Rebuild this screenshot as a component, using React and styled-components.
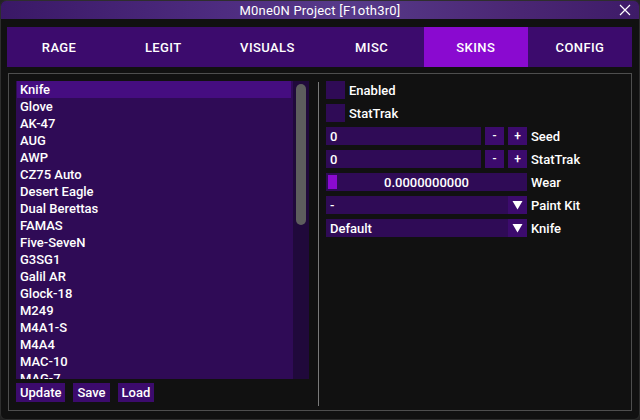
import React from 'react'
import styled, {createGlobalStyle} from 'styled-components'

const GlobalStyle = createGlobalStyle`
  html, body {
    margin: 0;
    padding: 0;
    background: #232323;
  }
  body {
    font-family: Roboto, "Noto Sans", "DejaVu Sans", sans-serif;
    color: #ffffff;
  }
  * {
    box-sizing: border-box;
  }
`

const Window = styled.div`
  width: 640px;
  height: 420px;
  display: flex;
  flex-direction: column;
  background: #111111;
  border: 1px solid #2e2e2e;
  border-radius: 6px;
  overflow: hidden;
`

const TitleBar = styled.div`
  height: 18px;
  flex: none;
  display: flex;
  align-items: center;
  justify-content: center;
  position: relative;
  background: linear-gradient(90deg, #3a1866 0%, #4e2c80 35%, #573a8a 55%, #4b2774 80%, #3e1b68 100%);
  font-size: 13px;
  font-weight: 400;
  letter-spacing: 0.2px;
`

const CloseButton = styled.div`
  position: absolute;
  right: 8px;
  top: 3px;
  width: 12px;
  height: 12px;
  display: flex;
`

const Body = styled.div`
  flex: 1;
  display: flex;
  flex-direction: column;
  padding: 8px 7px 8px 6px;
  gap: 6px;
`

const TabBar = styled.div`
  height: 40px;
  display: flex;
  background: #3c0b6d;
`

const Tab = styled.div`
  flex: 1;
  display: flex;
  align-items: center;
  justify-content: center;
  font-size: 13px;
  font-weight: 500;
  letter-spacing: 0.4px;
  background: ${p => (p.active ? '#8a0ad0' : '#3c0b6d')};
`

const Frame = styled.div`
  flex: 1;
  margin-left: 1px;
  display: flex;
  border: 1px solid #4e4e4e;
`

const LeftColumn = styled.div`
  width: 309px;
  flex: none;
  display: flex;
  flex-direction: column;
  padding: 7px 9px 7px 7px;
  gap: 4px;
`

const ListBox = styled.div`
  height: 298px;
  display: flex;
  background: #2f0b56;
`

const ListItems = styled.div`
  flex: 1;
  overflow: hidden;
  padding: 0 2px 0 1px;
`

const ListItem = styled.div`
  height: 17px;
  line-height: 18px;
  padding-left: 3px;
  font-size: 13px;
  font-weight: 500;
  white-space: nowrap;
  background: ${p => (p.selected ? '#450d80' : 'transparent')};
`

const ScrollTrack = styled.div`
  width: 16px;
  flex: none;
  background: #20093b;
  padding: 3px 3px;
`

const ScrollGrab = styled.div`
  height: 141px;
  border-radius: 5px;
  background: #5d5d5d;
`

const ButtonRow = styled.div`
  display: flex;
  gap: 8px;
`

const Button = styled.div`
  height: 19px;
  display: flex;
  align-items: center;
  padding: 0 4px;
  font-size: 13px;
  font-weight: 500;
  background: #3c0b6d;
`

const Separator = styled.div`
  width: 1px;
  flex: none;
  margin: 8px 0 4px;
  background: #7a7a7a;
`

const RightColumn = styled.div`
  flex: 1;
  display: flex;
  flex-direction: column;
  gap: 5px;
  padding: 7px 7px 0 7px;
`

const Row = styled.div`
  height: 18px;
  display: flex;
  align-items: center;
  gap: 4px;
`

const CheckBox = styled.div`
  width: 19px;
  height: 18px;
  background: #2f0b56;
`

const Label = styled.span`
  font-size: 13px;
  font-weight: 500;
`

const InputField = styled.div`
  width: ${p => p.w}px;
  height: 18px;
  display: flex;
  align-items: center;
  padding-left: 4px;
  font-size: 13px;
  font-weight: 500;
  background: #2f0b56;
`

const StepButton = styled.div`
  width: 19px;
  height: 18px;
  display: flex;
  align-items: center;
  justify-content: center;
  font-size: 12px;
  font-weight: 500;
  background: #3c0b6d;
`

const Slider = styled.div`
  width: 201px;
  height: 18px;
  position: relative;
  display: flex;
  align-items: center;
  justify-content: center;
  font-size: 13px;
  font-weight: 500;
  background: #2f0b56;
`

const SliderGrab = styled.div`
  position: absolute;
  left: 2px;
  top: 2px;
  width: 9px;
  height: 14px;
  background: #8a0ad0;
`

const Combo = styled.div`
  width: 201px;
  height: 18px;
  display: flex;
  background: #2f0b56;
`

const ComboValue = styled.div`
  flex: 1;
  display: flex;
  align-items: center;
  padding-left: 4px;
  font-size: 13px;
  font-weight: 500;
`

const ComboArrow = styled.div`
  width: 19px;
  display: flex;
  align-items: center;
  justify-content: center;
  background: #3c0b6d;
`

const tabs = ['RAGE', 'LEGIT', 'VISUALS', 'MISC', 'SKINS', 'CONFIG']

const weapons = [
  'Knife',
  'Glove',
  'AK-47',
  'AUG',
  'AWP',
  'CZ75 Auto',
  'Desert Eagle',
  'Dual Berettas',
  'FAMAS',
  'Five-SeveN',
  'G3SG1',
  'Galil AR',
  'Glock-18',
  'M249',
  'M4A1-S',
  'M4A4',
  'MAC-10',
  'MAG-7',
]

const Arrow = () => (
  <svg width="11" height="10" viewBox="0 0 11 10">
    <path d="M0.5 1 L10.5 1 L5.5 9.5 Z" fill="#ffffff" />
  </svg>
)

const Stepper = ({value, label}) => (
  <Row>
    <InputField w={155}>{value}</InputField>
    <StepButton>-</StepButton>
    <StepButton>+</StepButton>
    <Label>{label}</Label>
  </Row>
)

const ComboRow = ({value, label}) => (
  <Row>
    <Combo>
      <ComboValue>{value}</ComboValue>
      <ComboArrow>
        <Arrow />
      </ComboArrow>
    </Combo>
    <Label>{label}</Label>
  </Row>
)

export default function App() {
  return (
    <>
      <GlobalStyle />
      <Window>
        <TitleBar>
          M0ne0N Project [F1oth3r0]
          <CloseButton>
            <svg width="12" height="12" viewBox="0 0 12 12">
              <path d="M1 1 L11 11 M11 1 L1 11" stroke="#ffffff" strokeWidth="1.2" />
            </svg>
          </CloseButton>
        </TitleBar>
        <Body>
          <TabBar>
            {tabs.map(t => (
              <Tab key={t} active={t === 'SKINS'}>
                {t}
              </Tab>
            ))}
          </TabBar>
          <Frame>
            <LeftColumn>
              <ListBox>
                <ListItems>
                  {weapons.map((w, i) => (
                    <ListItem key={w} selected={i === 0}>
                      {w}
                    </ListItem>
                  ))}
                </ListItems>
                <ScrollTrack>
                  <ScrollGrab />
                </ScrollTrack>
              </ListBox>
              <ButtonRow>
                <Button>Update</Button>
                <Button>Save</Button>
                <Button>Load</Button>
              </ButtonRow>
            </LeftColumn>
            <Separator />
            <RightColumn>
              <Row>
                <CheckBox />
                <Label>Enabled</Label>
              </Row>
              <Row>
                <CheckBox />
                <Label>StatTrak</Label>
              </Row>
              <Stepper value="0" label="Seed" />
              <Stepper value="0" label="StatTrak" />
              <Row>
                <Slider>
                  <SliderGrab />
                  0.0000000000
                </Slider>
                <Label>Wear</Label>
              </Row>
              <ComboRow value="-" label="Paint Kit" />
              <ComboRow value="Default" label="Knife" />
            </RightColumn>
          </Frame>
        </Body>
      </Window>
    </>
  )
}
